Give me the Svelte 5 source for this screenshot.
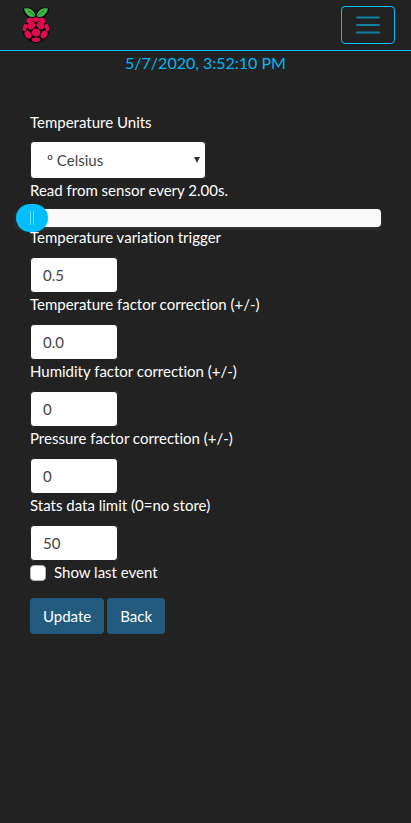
<script>
  let units = $state('celsius');
  let interval = $state(2);
  let showLast = $state(false);
  let fields = $state([
    { id: 'variation', label: 'Temperature variation trigger', value: '0.5' },
    { id: 'temperature', label: 'Temperature factor correction (+/-)', value: '0.0' },
    { id: 'humidity', label: 'Humidity factor correction (+/-)', value: '0' },
    { id: 'pressure', label: 'Pressure factor correction (+/-)', value: '0' },
    { id: 'limit', label: 'Stats data limit (0=no store)', value: '50' }
  ]);
</script>

<header>
  <a class="brand" href="#home" aria-label="Home">
    <svg width="28" height="36" viewBox="0 0 28 36" aria-hidden="true">
      <path d="M7 11C3 9 1 5 1 1c4-1 10-1 13 5 3-6 9-6 13-5 0 4-2 8-6 10 2 2 4 5 4 8 3 3 3 8 0 11-2 3-7 6-11 6s-9-3-11-6c-3-3-3-8 0-11 0-3 2-6 4-8z" fill="#080808" />
      <path d="M2 1.500c4-.7 10 .3 11.500 7.500C8 12 3 7 2 1.500zM26 1.500c-4-.7-10 .3-11.500 7.500 5.500 3 10.500-2 11.500-7.500z" fill="#3fb649" />
      <path d="M6 4c3 1 5 2.500 6.500 5M22 4c-3 1-5 2.500-6.500 5" fill="none" stroke="#176b25" stroke-width=".8" />
      <g fill="#e00b50">
        <ellipse cx="14" cy="12.500" rx="4" ry="2.300" />
        <ellipse cx="7.500" cy="13.500" rx="3.400" ry="2.500" transform="rotate(-38 7.500 13.500)" />
        <ellipse cx="20.500" cy="13.500" rx="3.400" ry="2.500" transform="rotate(38 20.500 13.500)" />
        <ellipse cx="9.300" cy="18.500" rx="4.200" ry="3.500" transform="rotate(-45 9.300 18.500)" />
        <ellipse cx="18.700" cy="18.500" rx="4.200" ry="3.500" transform="rotate(45 18.700 18.500)" />
        <ellipse cx="3" cy="20.500" rx="1.900" ry="3.900" transform="rotate(12 3 20.500)" />
        <ellipse cx="25" cy="20.500" rx="1.900" ry="3.900" transform="rotate(-12 25 20.500)" />
        <circle cx="14" cy="25.500" r="4.100" />
        <ellipse cx="6" cy="27.500" rx="3.200" ry="4.100" transform="rotate(-25 6 27.500)" />
        <ellipse cx="22" cy="27.500" rx="3.200" ry="4.100" transform="rotate(25 22 27.500)" />
        <ellipse cx="14" cy="32.800" rx="4.200" ry="2.200" />
      </g>
    </svg>
  </a>
  <button class="toggler" type="button" aria-label="Toggle navigation">
    <svg width="30" height="30" viewBox="0 0 30 30" aria-hidden="true">
      <path d="M4 7.500h22M4 15h22M4 22.500h22" stroke="#127fa3" stroke-width="2" stroke-linecap="round" />
    </svg>
  </button>
</header>

<main>
  <time datetime="2020-05-07T15:52:10">5/7/2020, 3:52:10 PM</time>
  <form onsubmit={(e) => e.preventDefault()}>
    <label for="units">Temperature Units</label>
    <div class="select">
      <select id="units" bind:value={units}>
        <option value="celsius">º Celsius</option>
        <option value="fahrenheit">º Fahrenheit</option>
      </select>
      <svg class="arrow" width="6" height="6" viewBox="0 0 6 6" aria-hidden="true"><path d="M0 0h6L3 6z" fill="#333" /></svg>
    </div>
    <label for="interval">Read from sensor every {interval.toFixed(2)}s.</label>
    <input id="interval" class="slider" type="range" min="2" max="60" step="0.5" bind:value={interval} />
    {#each fields as field (field.id)}
      <label for={field.id}>{field.label}</label>
      <input id={field.id} class="text" type="text" bind:value={field.value} />
    {/each}
    <label class="check"><input type="checkbox" bind:checked={showLast} />Show last event</label>
    <div class="actions">
      <button type="submit">Update</button>
      <button type="button">Back</button>
    </div>
  </form>
</main>

<style>
  :global(body) {
    background: #222;
    color: #fff;
    font: 15px/23px Lato, "Liberation Sans", sans-serif;
    font-variant-ligatures: none;
  }
  header, main, header *, main * { box-sizing: border-box; }
  header {
    display: flex;
    align-items: center;
    justify-content: space-between;
    height: 51px;
    padding: 0 16px 0 22px;
    border-bottom: 1px solid #00bfff;
  }
  .brand, header svg { display: block; }
  .toggler {
    display: flex;
    align-items: center;
    justify-content: center;
    width: 54px;
    height: 38px;
    padding: 0;
    background: transparent;
    border: 1px solid #00bfff;
    border-radius: 4px;
  }
  time {
    display: block;
    text-align: center;
    color: #00b7f4;
    font-size: 16px;
    line-height: 24px;
  }
  form {
    display: flex;
    flex-direction: column;
    align-items: flex-start;
    padding: 36px 30px 0;
  }
  .select { position: relative; width: 176px; margin-top: 7px; }
  select, .text {
    display: block;
    font: inherit;
    color: #444;
    background: #fff;
    border: 1px solid #222;
    border-radius: 4px;
  }
  select {
    appearance: none;
    width: 100%;
    height: 38px;
    padding: 0 16px;
  }
  .arrow { position: absolute; right: 6px; top: 16px; }
  .text { width: 88px; height: 36px; margin-top: 8px; padding: 0 12px; }
  .slider {
    appearance: none;
    display: block;
    width: calc(100% + 14px);
    height: 28px;
    margin: 2px 0 -6px -14px;
    background: transparent;
  }
  .slider::-webkit-slider-runnable-track {
    height: 18px;
    background: linear-gradient(to right, transparent 14px, #fafafa 14px);
    border-radius: 4px;
    box-shadow: 0 2px 4px #343a36;
  }
  .slider::-webkit-slider-thumb {
    appearance: none;
    width: 32px;
    height: 28px;
    margin-top: -5px;
    border-radius: 14px;
    background:
      linear-gradient(#70dcff, #70dcff) 14px 7px / 1px 14px no-repeat,
      linear-gradient(#70dcff, #70dcff) 17px 7px / 1px 14px no-repeat,
      #00bfff;
  }
  .check { display: flex; align-items: center; gap: 8px; }
  .check input {
    appearance: none;
    width: 16px;
    height: 16px;
    margin: 0;
    background: #fff;
    border: 1px solid #adb5bd;
    border-radius: 4px;
  }
  .check input:checked { background: #00bfff; }
  .actions { display: flex; gap: 3px; margin-top: 14px; }
  .actions button {
    height: 36px;
    padding: 0 13px;
    font: inherit;
    color: #fff;
    background: #225b7d;
    border: 0;
    border-radius: 4px;
  }
</style>
